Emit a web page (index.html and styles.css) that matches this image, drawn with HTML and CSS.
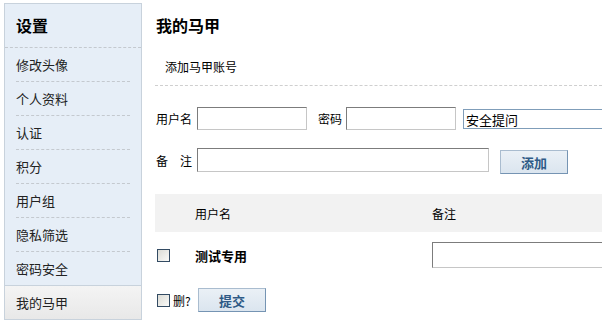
FILE: index.html
```html
<!DOCTYPE html>
<html lang="zh">
<head>
<meta charset="utf-8">
<title>我的马甲</title>
<link rel="stylesheet" href="styles.css">
</head>
<body>
<div class="page">
  <aside class="side">
    <div class="side-head">设置</div>
    <a class="item">修改头像</a>
    <a class="item">个人资料</a>
    <a class="item">认证</a>
    <a class="item">积分</a>
    <a class="item">用户组</a>
    <a class="item">隐私筛选</a>
    <a class="item last">密码安全</a>
    <a class="item current">我的马甲</a>
  </aside>
  <main class="main">
    <h1 class="title">我的马甲</h1>
    <div class="sub">添加马甲账号</div>
    <div class="row row1">
      <span class="lbl">用户名</span>
      <input class="txt short" type="text">
      <span class="lbl2">密码</span>
      <input class="txt short" type="password">
      <select class="sel"><option>安全提问</option></select>
    </div>
    <div class="row row2">
      <span class="lbl">备　注</span>
      <input class="txt long" type="text">
      <button class="btn add">添加</button>
    </div>
    <div class="thead">
      <span class="c1"></span>
      <span class="c2">用户名</span>
      <span class="c3">备注</span>
    </div>
    <div class="trow">
      <span class="c1"><input class="chk" type="checkbox"></span>
      <span class="c2 strong">测试专用</span>
      <span class="c3"><input class="txt note" type="text"></span>
    </div>
    <div class="foot">
      <input class="chk" type="checkbox">
      <span class="del">删?</span>
      <button class="btn submit">提交</button>
    </div>
  </main>
</div>
</body>
</html>
```
FILE: styles.css
```css
html, body {
  margin: 0;
  padding: 0;
  width: 602px;
  height: 322px;
  overflow: hidden;
  background: #fff;
}
body {
  font-family: "Noto Sans CJK SC", "DejaVu Sans", sans-serif;
  font-size: 12px;
  color: #000;
}
.page {
  display: flex;
  align-items: flex-start;
  padding: 3px 0 0 4px;
}
.side {
  flex: none;
  width: 138px;
  box-sizing: border-box;
  background: #e6eef7;
  border: 1px solid #c8d2dc;
  display: flex;
  flex-direction: column;
}
.side-head {
  height: 43px;
  line-height: 43px;
  padding-left: 11px;
  font-size: 16px;
  font-weight: bold;
  border-bottom: 1px dashed #c4c9cf;
}
.item {
  display: block;
  margin: 0 11px;
  height: 33px;
  line-height: 33px;
  font-size: 13px;
  color: #222;
  border-bottom: 1px dashed #c4c9cf;
}
.item.last {
  border-bottom: 0;
}
.item.current {
  margin: 0;
  padding-left: 11px;
  border-bottom: 0;
  border-top: 1px solid #c8d2dc;
  background: linear-gradient(#f4f4f4, #e8e8e8);
}
.main {
  flex: none;
  width: 447px;
  margin-left: 13px;
  overflow: hidden;
}
.title {
  margin: 11px 0 0 1px;
  font-size: 16px;
  line-height: 22px;
  font-weight: bold;
}
.sub {
  margin-top: 21px;
  padding: 0 0 8px 10px;
  line-height: 20px;
  border-bottom: 1px dashed #cfcfcf;
}
.row {
  display: flex;
  align-items: center;
  padding-left: 1px;
}
.row1 {
  margin-top: 21px;
  height: 23px;
}
.row2 {
  margin-top: 18px;
  height: 24px;
}
.lbl {
  width: 41px;
  flex: none;
}
.lbl2 {
  margin-left: 11px;
  width: 28px;
  flex: none;
}
.txt {
  box-sizing: border-box;
  margin: 0;
  padding: 0 3px;
  background: #fff;
  border: 1px solid;
  border-color: #7c7c7c #c6c6c6 #c6c6c6 #7c7c7c;
  font: inherit;
  flex: none;
}
.short {
  width: 110px;
  height: 23px;
}
.long {
  width: 292px;
  height: 24px;
}
.sel {
  appearance: none;
  -webkit-appearance: none;
  box-sizing: border-box;
  margin-left: 7px;
  width: 170px;
  height: 20px;
  padding: 0 2px;
  border: 1px solid #7f9db9;
  background: #fff;
  font: inherit;
  font-size: 13px;
  color: #000;
  flex: none;
}
.btn {
  box-sizing: border-box;
  width: 68px;
  height: 24px;
  margin: 0;
  padding: 0;
  border: 1px solid;
  border-color: #a9bccf #7594b3 #7594b3 #a9bccf;
  background: linear-gradient(#eaf0f6, #dbe5ef);
  color: #2e5a86;
  font: inherit;
  font-size: 13px;
  font-weight: bold;
  flex: none;
}
.add {
  margin-left: 11px;
  margin-top: 4px;
}
.thead {
  margin-top: 22px;
  height: 38px;
  background: #f2f2f2;
  display: grid;
  grid-template-columns: 40px 237px 1fr;
  align-items: center;
}
.trow {
  margin-top: 10px;
  height: 26px;
  display: grid;
  grid-template-columns: 40px 237px 1fr;
  align-items: center;
}
.c1 {
  display: flex;
  align-items: center;
  padding-left: 2px;
}
.strong {
  font-weight: bold;
  font-size: 13px;
}
.note {
  width: 200px;
  height: 26px;
  display: block;
}
.chk {
  appearance: none;
  -webkit-appearance: none;
  box-sizing: border-box;
  width: 13px;
  height: 13px;
  margin: 0;
  border: 1px solid #334b63;
  background: linear-gradient(135deg, #dcdcd6, #fafaf8);
  flex: none;
}
.foot {
  margin-top: 20px;
  margin-bottom: 6px;
  display: flex;
  align-items: center;
  height: 24px;
  padding-left: 2px;
}
.del {
  margin-left: 3px;
  width: 25px;
}
.submit {
  margin-left: 0;
}
```
